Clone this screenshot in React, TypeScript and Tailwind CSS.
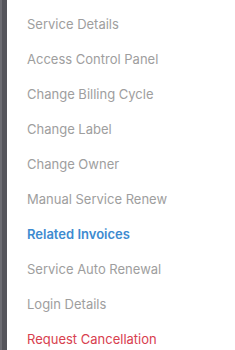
const items = [
  { label: "Service Details" },
  { label: "Access Control Panel" },
  { label: "Change Billing Cycle" },
  { label: "Change Label" },
  { label: "Change Owner" },
  { label: "Manual Service Renew" },
  { label: "Related Invoices", active: true },
  { label: "Service Auto Renewal" },
  { label: "Login Details" },
  { label: "Request Cancellation", danger: true },
];

export default function App() {
  return (
    <div className="flex h-[350px] w-[235px] overflow-hidden bg-white font-['Inter',sans-serif]">
      <div className="flex w-[7px] shrink-0">
        <div className="w-[2px] bg-[#6c6c72]" />
        <div className="flex-1 bg-[#55555b]" />
      </div>
      <ul className="flex flex-col pl-5 pt-[15px]">
        {items.map((item) => (
          <li
            key={item.label}
            className={
              "h-[35px] shrink-0 text-[13px] leading-[18px] whitespace-nowrap " +
              (item.active
                ? "font-semibold text-[#3d8bd0]"
                : item.danger
                  ? "text-[#d8404e]"
                  : "text-[#9e9e9e]")
            }
          >
            {item.label}
          </li>
        ))}
      </ul>
    </div>
  );
}
